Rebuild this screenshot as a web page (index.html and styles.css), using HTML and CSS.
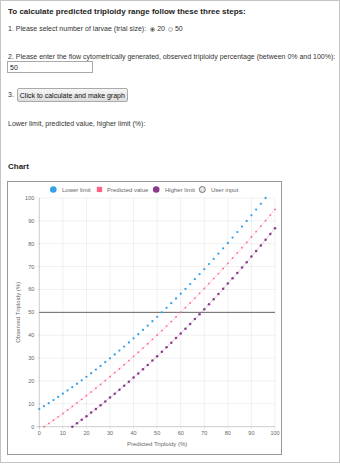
FILE: index.html
```html
<!DOCTYPE html>
<html>
  <head>
    <title>Triploidy range</title>
    <link rel="stylesheet" href="styles.css">
  </head>
  <body>
    <div class="frame">
      <h1>To calculate predicted triploidy range follow these three steps:</h1>
      <p class="step step-one">
        1. Please select number of larvae (trial size):
        <input type="radio" name="larvae" id="n20" value="20" checked>
        <label for="n20">20</label>
        <input type="radio" name="larvae" id="n50" value="50">
        <label for="n50">50</label>
      </p>
      <p class="step step-two">2. Please enter the flow cytometrically generated, observed triploidy percentage (between 0% and 100%):</p>
      <input type="text" class="observed" id="observed" value="50">
      <p class="step step-three">3. <button class="calc">Click to calculate and make graph</button></p>
      <p class="step result">Lower limit, predicted value, higher limit (%):</p>
      <h2>Chart</h2>
      <div class="chart-box">
        <svg id="chart" width="273" height="272" viewBox="0 0 273 272"></svg>
      </div>
    </div>

    <script>
      // plot area, in svg pixels
      const X0 = 31.3, XS = 2.357, Y0 = 244.7, YS = 2.287;
      const px = v => X0 + v * XS;
      const py = v => Y0 - v * YS;

      // fitted curves: observed = a + b*p + c*p^2
      const series = [
        { name: "Lower limit", a: 7.7, b: 0.6386, c: 0.003364, color: "#36a2eb", r: 1.15, line: false },
        { name: "Predicted value", a: -1.41, b: 0.6957, c: 0.002684, color: "#ff6384", r: 0.9, line: true },
        { name: "Higher limit", a: -9.84, b: 0.66, c: 0.003063, color: "#8a3a8a", r: 1.25, line: true }
      ];

      const svg = document.getElementById("chart");
      const NS = "http://www.w3.org/2000/svg";

      function el(name, attrs, text) {
        const node = document.createElementNS(NS, name);
        for (const k in attrs) node.setAttribute(k, attrs[k]);
        if (text !== undefined) node.textContent = text;
        svg.appendChild(node);
        return node;
      }

      // grid and ticks
      for (let i = 0; i <= 10; i++) {
        const v = i * 10;
        const stroke = i === 0 ? "rgba(0,0,0,0.25)" : "rgba(0,0,0,0.08)";
        el("line", { x1: px(v), y1: py(100), x2: px(v), y2: py(0) + 3, stroke: stroke, "stroke-width": 0.8 });
        el("line", { x1: px(0) - 3, y1: py(v), x2: px(100), y2: py(v), stroke: stroke, "stroke-width": 0.8 });
        el("text", { x: px(0) - 5, y: py(v) + 2, "text-anchor": "end", class: "tick" }, v);
        el("text", { x: px(v), y: py(0) + 8, "text-anchor": "middle", class: "tick" }, v);
      }

      el("text", { x: (px(0) + px(100)) / 2, y: 264, "text-anchor": "middle", class: "axis-title" }, "Predicted Triploidy (%)");
      el("text", { x: 0, y: 0, "text-anchor": "middle", class: "axis-title",
                   transform: "translate(12 " + (py(50)) + ") rotate(-90)" }, "Observed Triploidy (%)");

      // user input line
      el("line", { x1: px(0), y1: py(50), x2: px(100), y2: py(50), stroke: "#666", "stroke-width": 1 });

      // data
      series.forEach(function(s) {
        const pts = [];
        for (let p = 0; p <= 100; p += 2) {
          const y = s.a + s.b * p + s.c * p * p;
          if (y >= -0.5 && y <= 100.5) pts.push([px(p), py(Math.max(0, y))]);
        }
        if (s.line) {
          el("polyline", { points: pts.map(q => q.join(",")).join(" "), fill: "none", stroke: s.color, "stroke-opacity": 0.45, "stroke-width": 0.6 });
        }
        pts.forEach(function(q) {
          el("circle", { cx: q[0], cy: q[1], r: s.r, fill: s.color });
        });
      });

      // legend
      el("circle", { cx: 45.3, cy: 7.5, r: 3.3, fill: "#36a2eb" });
      el("text", { x: 54, y: 9.6, class: "legend" }, "Lower limit");
      el("rect", { x: 88.8, y: 4.8, width: 5.3, height: 5.3, fill: "#ff6384" });
      el("text", { x: 99, y: 9.6, class: "legend" }, "Predicted value");
      el("circle", { cx: 148.2, cy: 7.5, r: 3.3, fill: "#8a3a8a" });
      el("text", { x: 157, y: 9.6, class: "legend" }, "Higher limit");
      el("circle", { cx: 194.3, cy: 7.5, r: 3, fill: "#e8e8e8", stroke: "#555", "stroke-width": 0.8 });
      el("text", { x: 203, y: 9.6, class: "legend" }, "User input");
    </script>
  </body>
</html>
```

FILE: styles.css
```css
body {
  margin: 0;
  background-color: #fff;
  color: #333;
  font-family: "Liberation Sans", Arial, sans-serif;
  font-size: 7px;
}

.frame {
  box-sizing: border-box;
  width: 340px;
  height: 463px;
  border: 1px solid #c4c4c4;
  padding: 6px 7px 0 6px;
}

h1 {
  font-size: 8px;
  line-height: 10px;
  color: #222;
  margin: 0 0 0 1px;
}

h2 {
  font-size: 8px;
  line-height: 10px;
  color: #222;
  margin: 34px 0 0 1px;
}

.step {
  margin: 0 0 0 1px;
  line-height: 8px;
  white-space: nowrap;
}

.step-one {
  margin-top: 8px;
  display: flex;
  align-items: center;
}

.step-two {
  margin-top: 20px;
}

.step-three {
  margin-top: 15px;
  display: flex;
  align-items: center;
  height: 14px;
}

.result {
  margin-top: 18px;
}

input[type="radio"] {
  appearance: none;
  -webkit-appearance: none;
  box-sizing: border-box;
  width: 5px;
  height: 5px;
  margin: 0 2px 0 4px;
  border: 1px solid #b5b5b5;
  border-radius: 50%;
  background: #f2f2f2;
}

input[type="radio"]:checked {
  background: radial-gradient(circle, #555 0, #555 45%, #f2f2f2 60%);
  border-color: #999;
}

.step-one label + input[type="radio"] {
  margin-left: 3px;
}

.observed {
  display: block;
  box-sizing: border-box;
  width: 86px;
  height: 12px;
  margin: 0;
  padding: 0 2px;
  border: 1px solid #a9a9a9;
  font-family: "Liberation Sans", Arial, sans-serif;
  font-size: 7px;
  color: #222;
}

.calc {
  box-sizing: border-box;
  height: 14px;
  width: 111px;
  margin-left: 3px;
  padding: 0;
  border: 1px solid #aaa;
  border-radius: 2px;
  background: linear-gradient(#f6f6f6, #dedede);
  font-family: "Liberation Sans", Arial, sans-serif;
  font-size: 7px;
  color: #111;
}

.chart-box {
  width: 275px;
  height: 274px;
  box-sizing: border-box;
  margin-top: 9px;
  border: 1px solid #999;
}

.chart-box svg {
  display: block;
  font-family: "Liberation Sans", Arial, sans-serif;
}

.tick {
  font-size: 5.5px;
  fill: #666;
}

.axis-title {
  font-size: 6px;
  fill: #666;
}

.legend {
  font-size: 6px;
  fill: #666;
}
```
